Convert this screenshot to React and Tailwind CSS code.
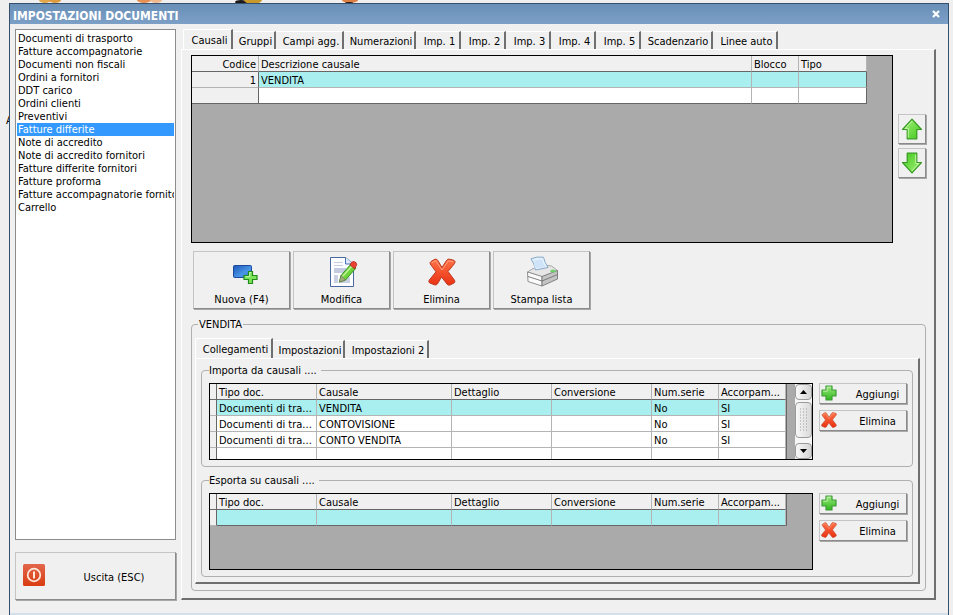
import { useState } from 'react';
import { clsx } from 'clsx';

const documenti = [
    'Documenti di trasporto',
    'Fatture accompagnatorie',
    'Documenti non fiscali',
    'Ordini a fornitori',
    'DDT carico',
    'Ordini clienti',
    'Preventivi',
    'Fatture differite',
    'Note di accredito',
    'Note di accredito fornitori',
    'Fatture differite fornitori',
    'Fatture proforma',
    'Fatture accompagnatorie fornitori',
    'Carrello',
];

const mainTabs = [
    { label: 'Causali', width: 'w-[50px]' },
    { label: 'Gruppi', width: 'w-[43px]' },
    { label: 'Campi agg.', width: 'w-[68px]' },
    { label: 'Numerazioni', width: 'w-[72px]' },
    { label: 'Imp. 1', width: 'w-[45px]' },
    { label: 'Imp. 2', width: 'w-[45px]' },
    { label: 'Imp. 3', width: 'w-[45px]' },
    { label: 'Imp. 4', width: 'w-[45px]' },
    { label: 'Imp. 5', width: 'w-[45px]' },
    { label: 'Scadenzario', width: 'w-[72px]' },
    { label: 'Linee auto', width: 'w-[65px]' },
];

const subTabs = [
    { label: 'Collegamenti', width: 'w-[78px]' },
    { label: 'Impostazioni', width: 'w-[72px]' },
    { label: 'Impostazioni 2', width: 'w-[84px]' },
];

const importRows = [
    ['Documenti di tra...', 'VENDITA', '', '', 'No', 'SI'],
    ['Documenti di tra...', 'CONTOVISIONE', '', '', 'No', 'SI'],
    ['Documenti di tra...', 'CONTO VENDITA', '', '', 'No', 'SI'],
    ['', '', '', '', '', ''],
];

const exportRows = [['', '', '', '', '', '']];

const raised = 'bg-[#f0f0f0] border border-t-[#c4c4c4] border-l-[#c4c4c4] border-r-[#8a8a8a] border-b-[#8a8a8a] shadow-[1px_1px_0_#a8a8a8]';

function PlusIcon({ className }) {
    return (
        <svg viewBox="0 0 16 16" className={className} aria-hidden="true">
            <defs>
                <linearGradient id="plus" x1="0" y1="0" x2="0" y2="1">
                    <stop offset="0" stopColor="#9be87e" />
                    <stop offset="1" stopColor="#2fb71c" />
                </linearGradient>
            </defs>
            <path d="M5 1h6v4h4v6h-4v4H5v-4H1V5h4z" fill="url(#plus)" stroke="#3f9a38" strokeWidth="1.2" strokeLinejoin="round" />
            <path d="M2.2 6.200h4V2.200h3.600" fill="none" stroke="#c9f5b8" strokeWidth=".8" />
        </svg>
    );
}

function CrossIcon({ className }) {
    return (
        <svg viewBox="0 0 28 28" className={className} aria-hidden="true">
            <defs>
                <linearGradient id="cross" x1="0" y1="0" x2="0" y2="1">
                    <stop offset="0" stopColor="#ff7247" />
                    <stop offset="1" stopColor="#ea3112" />
                </linearGradient>
            </defs>
            <path
                d="M3 3.500 7 1.200q1.800-.5 2.800 1.300L14 9.500 18.500 2.500q1.300-1.900 3.200-1.300l4.500 1.200q1.600 1 .4 3L20 13.500l6.500 8.700q1 1.700-.5 2.800l-4 2q-1.800.6-3-1L13.500 19 9.500 25.800q-1.200 1.700-3 1L1.700 25q-1.500-1-.5-2.800L8 13.800 2.300 6Q1.500 4.500 3 3.500z"
                fill="url(#cross)"
                stroke="#bb3920"
                strokeWidth="1"
                strokeLinejoin="round"
            />
            <path d="M3.500 5 7.500 2.700 14 12 20.500 2.800l4.500 1" fill="none" stroke="#ffa685" strokeWidth=".9" />
        </svg>
    );
}

function ArrowIcon({ down }) {
    return (
        <svg viewBox="0 0 22 22" className="size-[22px]" aria-hidden="true">
            <defs>
                <linearGradient id="arrow" x1="0" y1="0" x2="1" y2="1">
                    <stop offset="0" stopColor="#a6f07c" />
                    <stop offset="1" stopColor="#3fc91b" />
                </linearGradient>
            </defs>
            <g transform={down ? 'rotate(180 11 11)' : undefined}>
                <path d="M11 1.200 20.500 11.500H15.800v9.300h-9.600v-9.300H1.500z" fill="url(#arrow)" stroke="#379a22" strokeWidth="1.2" strokeLinejoin="round" />
                <path d="M11 3.200 4.200 10.500h3.100v9" fill="none" stroke="#c8f8ae" strokeWidth=".9" />
            </g>
        </svg>
    );
}

function NewIcon() {
    return (
        <svg viewBox="0 0 32 32" className="size-8" aria-hidden="true">
            <defs>
                <linearGradient id="screen" x1="0" y1="0" x2="1" y2="1">
                    <stop offset="0" stopColor="#1c56b8" />
                    <stop offset=".6" stopColor="#4a96e6" />
                    <stop offset="1" stopColor="#2c6fd0" />
                </linearGradient>
            </defs>
            <rect x="7.500" y="9.500" width="18" height="12" rx="1" fill="url(#screen)" stroke="#1d4a9c" />
            <path d="M22.500 15.500h4v4h4.500v4h-4.500v4h-4v-4h-4.500v-4h4.500z" fill="#7be35a" stroke="#218c18" strokeWidth="1.2" />
            <path d="M19.500 20.600h4.100v-4h1.800" fill="none" stroke="#d6fbc8" strokeWidth=".8" />
        </svg>
    );
}

function EditIcon() {
    return (
        <svg viewBox="0 0 32 32" className="size-8" aria-hidden="true">
            <path d="M4.500 1.500h15l8 6.500v22.500h-23z" fill="#fbfdff" stroke="#4a68a0" />
            <path d="M19.500 1.500V8h8" fill="#dbe9fa" stroke="#4a72b4" />
            <path d="M8 6.500h9M8 9.500h9" stroke="#c5cdda" />
            <path d="M8 12h12v5H8z" fill="#c3cbe0" />
            <path d="M8 19h4v8H8zM14 21h10v6H14z" fill="#c9d0e2" />
            <path d="M13.500 26 15 19.500 25 8l5 4-10.500 12z" fill="#6fd43c" stroke="#2e8a1f" strokeWidth=".9" />
            <path d="M16.500 20.500 26 10" stroke="#c2f59d" strokeWidth="1.4" />
            <path d="M13.300 26.300 15 19.500l4.500 4.500z" fill="#a5ad80" stroke="#5c6a44" strokeWidth=".6" />
            <path d="m24 8.800 1.500-2.600q2.500-1.700 4.700.6 1.300 2-.3 3.700L28.500 13z" fill="#ea4132" stroke="#a92318" strokeWidth=".7" />
        </svg>
    );
}

function PrinterIcon() {
    return (
        <svg viewBox="0 0 32 32" className="size-8" aria-hidden="true">
            <path d="M1.500 16 7 12.500l15-3 3.500.5 6 4.500-15 6.500z" fill="#e6e6e6" stroke="#959595" strokeWidth=".8" />
            <path d="M5 2.800Q11 .2 17.500 1.200q1 5 4.500 10.300L9.500 14Q8.500 8 5 2.800z" fill="#e3f1fd" stroke="#7f9fc4" strokeWidth=".9" />
            <path d="M8.500 12.500Q8.500 8 7 5q5-2 9-1.500 1 4 3.500 7.500z" fill="#cfe4f8" />
            <path d="M1.500 16 16 20.500V30L2 25.500z" fill="#fbfbfb" stroke="#858585" strokeWidth=".9" />
            <path d="M16 20.500l15.500-6v8.500L16 30z" fill="#c4c4c4" stroke="#777" strokeWidth=".9" />
            <path d="M2 20.500 16 25l15.500-6.500" fill="none" stroke="#707070" strokeWidth=".9" />
            <ellipse cx="27" cy="15" rx="2.800" ry="1.500" fill="#6fd068" />
        </svg>
    );
}

function PowerIcon() {
    return (
        <svg viewBox="0 0 22 22" className="size-[22px] mb-[2px]" aria-hidden="true">
            <defs>
                <linearGradient id="power" x1="0" y1="0" x2="0" y2="1">
                    <stop offset="0" stopColor="#e2674c" />
                    <stop offset="1" stopColor="#d93c10" />
                </linearGradient>
            </defs>
            <rect width="22" height="22" rx="1.500" fill="url(#power)" />
            <circle cx="11" cy="11" r="6.300" fill="none" stroke="#ffeadb" strokeWidth="1.7" />
            <path d="M11 7.500v7" stroke="#ffeadb" strokeWidth="2" />
        </svg>
    );
}

// what is left visible of the toolbar behind the dialog
function ToolbarRemains() {
    return (
        <svg className="block h-[3px] w-full" aria-hidden="true">
            <ellipse cx="45" cy="0" rx="6" ry="3" fill="#e2a548" />
            <ellipse cx="55" cy="0" rx="6" ry="3" fill="#dd9a3e" />
            <ellipse cx="144" cy="0" rx="7" ry="3" fill="#e58f52" />
            <ellipse cx="156" cy="0" rx="6" ry="3" fill="#efb98c" />
            <ellipse cx="241" cy="2" rx="6" ry="2" fill="#1c1a18" />
            <ellipse cx="253" cy="0" rx="9" ry="4" fill="#c99a2b" />
            <ellipse cx="350" cy="0" rx="8" ry="3" fill="#dd7f43" />
            <ellipse cx="349" cy="3" rx="4" ry="1" fill="#2a1a14" />
        </svg>
    );
}

function Tabs({ tabs, active, onSelect }) {
    return (
        <div role="tablist" className="flex items-end h-5">
            {tabs.map((tab) => {
                const selected = tab.label === active;
                return (
                    <button
                        key={tab.label}
                        role="tab"
                        aria-selected={selected}
                        onClick={() => onSelect(tab.label)}
                        className={clsx(
                            'shrink-0 pl-1 pt-[2px] text-center whitespace-nowrap border-t border-t-white border-r-2 border-r-[#6f6f6f]',
                            tab.width,
                            selected ? 'h-5 border-l border-l-white' : 'h-[18px]'
                        )}
                    >
                        {tab.label}
                    </button>
                );
            })}
        </div>
    );
}

function LinksGrid({ rows, scroll }) {
    const cell = 'h-4 p-0 pt-[2px] pl-[2px] border-r border-b border-[#b4b4b4] font-normal text-left whitespace-nowrap overflow-hidden';
    return (
        <div className="flex flex-1 min-w-0 h-[77px] border border-black bg-[#aaaaaa] overflow-hidden">
            <div className="flex-1 min-w-0">
                <table className="w-full table-fixed border-separate border-spacing-0 border-r border-[#666]">
                    <colgroup>
                        <col className="w-[7px]" />
                        <col className="w-[100px]" />
                        <col />
                        <col className="w-[100px]" />
                        <col className="w-[100px]" />
                        <col className="w-[67px]" />
                        <col className="w-[67px]" />
                    </colgroup>
                    <thead>
                        <tr className="bg-[#f0f0f0]">
                            <td className="h-4 p-0 border-r border-b border-[#666]" />
                            {['Tipo doc.', 'Causale', 'Dettaglio', 'Conversione', 'Num.serie', 'Accorpam...'].map((h) => (
                                <th key={h} className={clsx(cell, 'border-b-[#666]')}>{h}</th>
                            ))}
                        </tr>
                    </thead>
                    <tbody>
                        {rows.map((row, i) => (
                            <tr key={i} className={i === 0 ? 'bg-[#a9efef]' : 'bg-white'}>
                                <td className="h-4 p-0 bg-[#f0f0f0] border-r border-b border-r-[#666] border-b-[#b4b4b4]" />
                                {row.map((value, j) => (
                                    <td key={j} className={clsx(cell, i === rows.length - 1 && 'border-b-[#666]')}>{value}</td>
                                ))}
                            </tr>
                        ))}
                    </tbody>
                </table>
            </div>
            {scroll ? (
                <div className="ml-2 w-[17px] flex flex-col justify-between bg-[#f6f6f6]">
                    <button aria-label="Su" className="h-4 flex items-center justify-center rounded-sm border border-[#9a9a9a] bg-gradient-to-r from-[#f8f8f8] to-[#d4d4d4]">
                        <svg viewBox="0 0 7 4" className="w-[7px] h-1"><path d="M0 4 3.500 0 7 4z" /></svg>
                    </button>
                    <div className="h-9 mb-1 flex items-center justify-center rounded-sm border border-[#9a9a9a] bg-gradient-to-r from-[#f8f8f8] to-[#d9d9d9]">
                        <svg viewBox="0 0 8 24" className="w-2 h-6">
                            {[1, 4, 7, 10, 13, 16, 19, 22].map((y) => (
                                <path key={y} d={`M0 ${y}h1M3 ${y}h1M6 ${y}h1`} stroke="#9c9c9c" />
                            ))}
                        </svg>
                    </div>
                    <button aria-label="Giù" className="h-4 flex items-center justify-center rounded-sm border border-[#9a9a9a] bg-gradient-to-r from-[#f8f8f8] to-[#d4d4d4]">
                        <svg viewBox="0 0 7 4" className="w-[7px] h-1"><path d="M0 0h7L3.500 4z" /></svg>
                    </button>
                </div>
            ) : (
                <div className="w-[25px]" />
            )}
        </div>
    );
}

function LinksGroup({ title, rows, scroll }) {
    return (
        <fieldset className="min-w-0 h-[103px] border border-[#b0b0b0] rounded-[4px] pl-[7px] pr-[5px] pt-[6px]">
            <legend className="pr-1 leading-[13px]">{title}</legend>
            <div className="flex items-start gap-[6px]">
                <LinksGrid rows={rows} scroll={scroll} />
                <div className="w-[88px] shrink-0 flex flex-col gap-[6px]">
                    <button className={clsx(raised, 'h-[21px] flex items-center')}>
                        <PlusIcon className="size-4 ml-[1px] mb-[2px] shrink-0" />
                        <span className="flex-1 pl-4 pr-1 pt-[2px] text-center">Aggiungi</span>
                    </button>
                    <button className={clsx(raised, 'h-[21px] flex items-center')}>
                        <CrossIcon className="size-4 ml-[1px] mb-[2px] shrink-0" />
                        <span className="flex-1 pl-4 pr-1 pt-[2px] text-center">Elimina</span>
                    </button>
                </div>
            </div>
        </fieldset>
    );
}

function ToolButton({ icon, label }) {
    return (
        <button className={clsx(raised, 'w-[97px] h-[58px] flex flex-col items-center justify-end pb-[2px]')}>
            <span className="h-8 flex items-center">{icon}</span>
            <span className="mt-[5px]">{label}</span>
        </button>
    );
}

export default function App() {
    const [documento, setDocumento] = useState('Fatture differite');
    const [tab, setTab] = useState('Causali');
    const [subTab, setSubTab] = useState('Collegamenti');

    const head = 'h-4 p-0 px-[2px] pt-[2px] border-r border-b border-r-[#b4b4b4] border-b-[#666] font-normal text-left';
    const cell = 'h-4 p-0 px-[2px] pt-[2px] border-r border-b border-[#b4b4b4]';

    return (
        <div className="h-screen overflow-hidden flex flex-col bg-[#efefef] text-black text-[11px] leading-[13px] font-['DejaVu_Sans_Condensed','DejaVu_Sans',sans-serif]">
            <ToolbarRemains />
            <div className="flex-1 flex">
                <div className="w-[9px] shrink-0 overflow-hidden pt-[111px] pl-[6px]">A</div>
                <div className="flex-1 min-w-0 mr-1 flex flex-col border border-b-0 border-[#34506e] bg-[#f0f0f0]">
                    <div className="h-5 shrink-0 flex items-center justify-between pl-[3px] pr-[6px] bg-gradient-to-b from-[#6a90b8] to-[#7c9fc6] text-white">
                        <h1 className="text-[12px] font-bold pt-1">IMPOSTAZIONI DOCUMENTI</h1>
                        <button aria-label="Chiudi" className="size-3 flex items-center justify-center">
                            <svg viewBox="0 0 8 8" className="size-2"><path d="m1 1 6 6M7 1 1 7" stroke="#fff" strokeWidth="2.2" /></svg>
                        </button>
                    </div>

                    <div className="flex-1 flex gap-[5px] pl-[5px] pr-3 pt-[5px] pb-[13px] border-b-2 border-[#d3dfeb]">
                        <div className="w-[161px] shrink-0 flex flex-col gap-3">
                            <ul role="listbox" aria-label="Documenti" className="flex-1 bg-white border border-[#8c8c8c] p-[1px] pt-[2px]">
                                {documenti.map((d) => (
                                    <li
                                        key={d}
                                        role="option"
                                        aria-selected={d === documento}
                                        onClick={() => setDocumento(d)}
                                        className={clsx(
                                            'h-[13px] pl-[1px] whitespace-nowrap overflow-hidden',
                                            d === documento && 'bg-[#3399ff] text-white'
                                        )}
                                    >
                                        {d}
                                    </li>
                                ))}
                            </ul>
                            <button className={clsx(raised, 'h-12 flex items-center pl-[7px]')}>
                                <PowerIcon />
                                <span className="flex-1 pl-4 pr-2 pt-[2px] text-center">Uscita (ESC)</span>
                            </button>
                        </div>

                        <div className="flex-1 min-w-0 flex flex-col">
                            <div className="pl-[2px]">
                                <Tabs tabs={mainTabs} active={tab} onSelect={setTab} />
                            </div>
                            <div className="flex-1 border-t border-l border-t-white border-l-white border-r-2 border-b-2 border-r-[#6f6f6f] border-b-[#6f6f6f] pl-[9px] pr-2 pt-[5px]">
                                <div className="flex gap-[5px]">
                                    <div className="flex-1 min-w-0 h-[188px] border border-black bg-[#aaaaaa] pr-[25px]">
                                        <table className="w-full table-fixed border-separate border-spacing-0">
                                            <colgroup>
                                                <col className="w-[67px]" />
                                                <col />
                                                <col className="w-[47px]" />
                                                <col className="w-[68px]" />
                                            </colgroup>
                                            <thead>
                                                <tr className="bg-[#f0f0f0]">
                                                    <th className={clsx(head, 'text-right border-r-[#666]')}>Codice</th>
                                                    <th className={head}>Descrizione causale</th>
                                                    <th className={head}>Blocco</th>
                                                    <th className={clsx(head, 'border-r-[#666]')}>Tipo</th>
                                                </tr>
                                            </thead>
                                            <tbody>
                                                <tr className="bg-[#a9efef]">
                                                    <td className={clsx(cell, 'text-right bg-[#f0f0f0] border-r-[#666]')}>1</td>
                                                    <td className={cell}>VENDITA</td>
                                                    <td className={cell} />
                                                    <td className={clsx(cell, 'border-r-[#666]')} />
                                                </tr>
                                                <tr className="bg-white">
                                                    <td className={clsx(cell, 'bg-[#f0f0f0] border-r-[#666] border-b-[#666]')} />
                                                    <td className={clsx(cell, 'border-b-[#666]')} />
                                                    <td className={clsx(cell, 'border-b-[#666]')} />
                                                    <td className={clsx(cell, 'border-r-[#666] border-b-[#666]')} />
                                                </tr>
                                            </tbody>
                                        </table>
                                    </div>
                                    <div className="w-7 shrink-0 flex flex-col gap-1 pt-[59px]">
                                        <button aria-label="Sposta su" className={clsx(raised, 'h-[30px] flex items-center justify-center')}>
                                            <ArrowIcon />
                                        </button>
                                        <button aria-label="Sposta giù" className={clsx(raised, 'h-[30px] flex items-center justify-center')}>
                                            <ArrowIcon down />
                                        </button>
                                    </div>
                                </div>

                                <div className="flex gap-[3px] pl-[2px] pt-2">
                                    <ToolButton icon={<NewIcon />} label="Nuova (F4)" />
                                    <ToolButton icon={<EditIcon />} label="Modifica" />
                                    <ToolButton icon={<CrossIcon className="size-7" />} label="Elimina" />
                                    <ToolButton icon={<PrinterIcon />} label="Stampa lista" />
                                </div>

                                <fieldset className="min-w-0 mt-[9px] border border-[#b0b0b0] rounded-[4px] pl-[3px] pr-[5px] pt-[7px] pb-[6px]">
                                    <legend className="ml-[3px] px-[1px] leading-[13px]">VENDITA</legend>
                                    <Tabs tabs={subTabs} active={subTab} onSelect={setSubTab} />
                                    <div className="border-t border-l border-t-white border-l-white border-r-2 border-b-2 border-r-[#6f6f6f] border-b-[#6f6f6f] px-[5px] pt-[5px] pb-[5px] flex flex-col gap-[7px]">
                                        <LinksGroup title="Importa da causali ...." rows={importRows} scroll />
                                        <LinksGroup title="Esporta su causali ...." rows={exportRows} />
                                    </div>
                                </fieldset>
                            </div>
                        </div>
                    </div>
                </div>
            </div>
        </div>
    );
}
